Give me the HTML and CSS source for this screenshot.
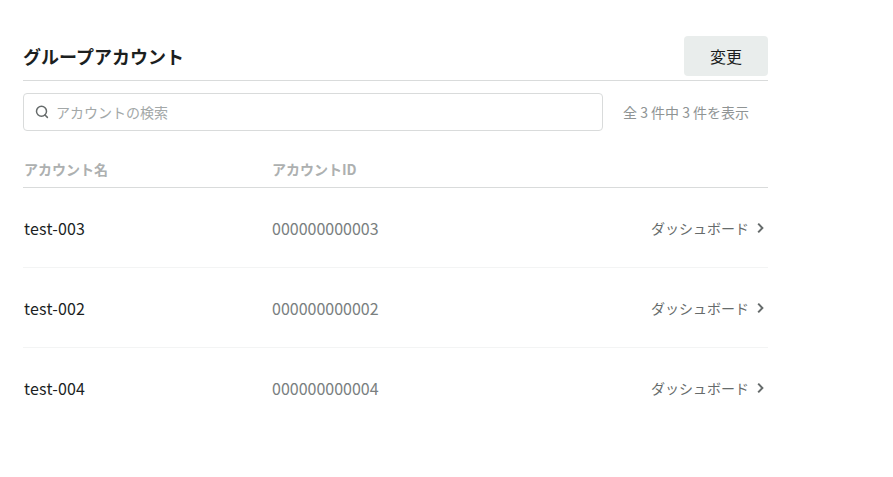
FILE: index.html
```
<!DOCTYPE html>
<html lang="ja">
<head>
  <meta charset="UTF-8">
  <meta name="viewport" content="width=device-width, initial-scale=1.0">
  <title>グループアカウント</title>
  <link rel="stylesheet" href="styles.css">
</head>
<body>
  <div class="container">
    <!-- Header -->
    <div class="header">
      <h1>グループアカウント</h1>
      <button class="change-btn">変更</button>
    </div>

    <!-- Search -->
    <div class="search-row">
      <label class="search-box">
        <svg class="search-icon" width="16" height="16" viewBox="0 0 16 16" fill="none">
          <circle cx="7.5" cy="7.2" r="5" stroke="#666b6b" stroke-width="1.5"/>
          <path d="M11 11l2.4 2.4" stroke="#666b6b" stroke-width="1.5" stroke-linecap="round"/>
        </svg>
        <input type="text" placeholder="アカウントの検索">
      </label>
      <span class="search-count">全 3 件中 3 件を表示</span>
    </div>

    <!-- Table -->
    <div class="table-head">
      <span class="col-name">アカウント名</span>
      <span class="col-id">アカウントID</span>
    </div>

    <div class="table-row">
      <span class="col-name">test-003</span>
      <span class="col-id account-id">000000000003</span>
      <a class="dash-link" href="#">ダッシュボード
        <svg width="10" height="12" viewBox="0 0 10 12" fill="none"><path d="M2.2 1.6L6.4 6 2.2 10.4" stroke="#666b6b" stroke-width="2"/></svg>
      </a>
    </div>
    <div class="table-row">
      <span class="col-name">test-002</span>
      <span class="col-id account-id">000000000002</span>
      <a class="dash-link" href="#">ダッシュボード
        <svg width="10" height="12" viewBox="0 0 10 12" fill="none"><path d="M2.2 1.6L6.4 6 2.2 10.4" stroke="#666b6b" stroke-width="2"/></svg>
      </a>
    </div>
    <div class="table-row">
      <span class="col-name">test-004</span>
      <span class="col-id account-id">000000000004</span>
      <a class="dash-link" href="#">ダッシュボード
        <svg width="10" height="12" viewBox="0 0 10 12" fill="none"><path d="M2.2 1.6L6.4 6 2.2 10.4" stroke="#666b6b" stroke-width="2"/></svg>
      </a>
    </div>
  </div>
</body>
</html>
```

FILE: styles.css
```
/* General Styles */
body {
  font-family: "Noto Sans CJK JP", "Noto Sans", sans-serif;
  margin: 0;
  padding: 0;
  background-color: #fff;
  color: #1c1f1f;
}

.container {
  width: 745px;
  margin-left: 23px;
  padding-top: 36px;
}

/* Header */
.header {
  display: flex;
  justify-content: space-between;
  align-items: flex-start;
  height: 44px;
  border-bottom: 1px solid #d9dbdb;
}

h1 {
  margin: 0;
  font-size: 18px;
  font-weight: 700;
  line-height: 40px;
}

.change-btn {
  width: 84px;
  height: 40px;
  border: none;
  border-radius: 4px;
  background-color: #e9edec;
  color: #1c1f1f;
  font-family: inherit;
  font-size: 16px;
}

/* Search */
.search-row {
  display: flex;
  align-items: center;
  margin-top: 12px;
}

.search-box {
  display: flex;
  align-items: center;
  gap: 6px;
  box-sizing: border-box;
  width: 580px;
  height: 38px;
  padding-left: 10px;
  border: 1px solid #d9dbdb;
  border-radius: 4px;
}

.search-box input {
  flex: 1;
  border: none;
  outline: none;
  padding: 0;
  font-family: inherit;
  font-size: 14px;
  color: #1c1f1f;
}

.search-box input::placeholder {
  color: #a3a8a8;
  opacity: 1;
}

.search-count {
  margin-left: 20px;
  font-size: 14px;
  color: #8f9494;
}

/* Table */
.table-head {
  display: flex;
  align-items: center;
  height: 36px;
  margin-top: 20px;
  padding-left: 1px;
  border-bottom: 1px solid #d9dbdb;
  font-size: 14px;
  font-weight: 700;
  color: #adb0b0;
}

.table-row {
  display: flex;
  align-items: center;
  height: 79px;
  padding-left: 1px;
  border-bottom: 1px solid #f3f4f4;
  font-size: 16px;
}

.table-row:last-child {
  border-bottom: none;
}

.col-name {
  width: 248px;
}

.table-row .col-name {
  letter-spacing: 0.2px;
}

.account-id {
  color: #7a7f7f;
}

.dash-link {
  display: flex;
  align-items: center;
  gap: 7px;
  margin-right: 2px;
  margin-left: auto;
  font-size: 14px;
  color: #666b6b;
  text-decoration: none;
}
```
